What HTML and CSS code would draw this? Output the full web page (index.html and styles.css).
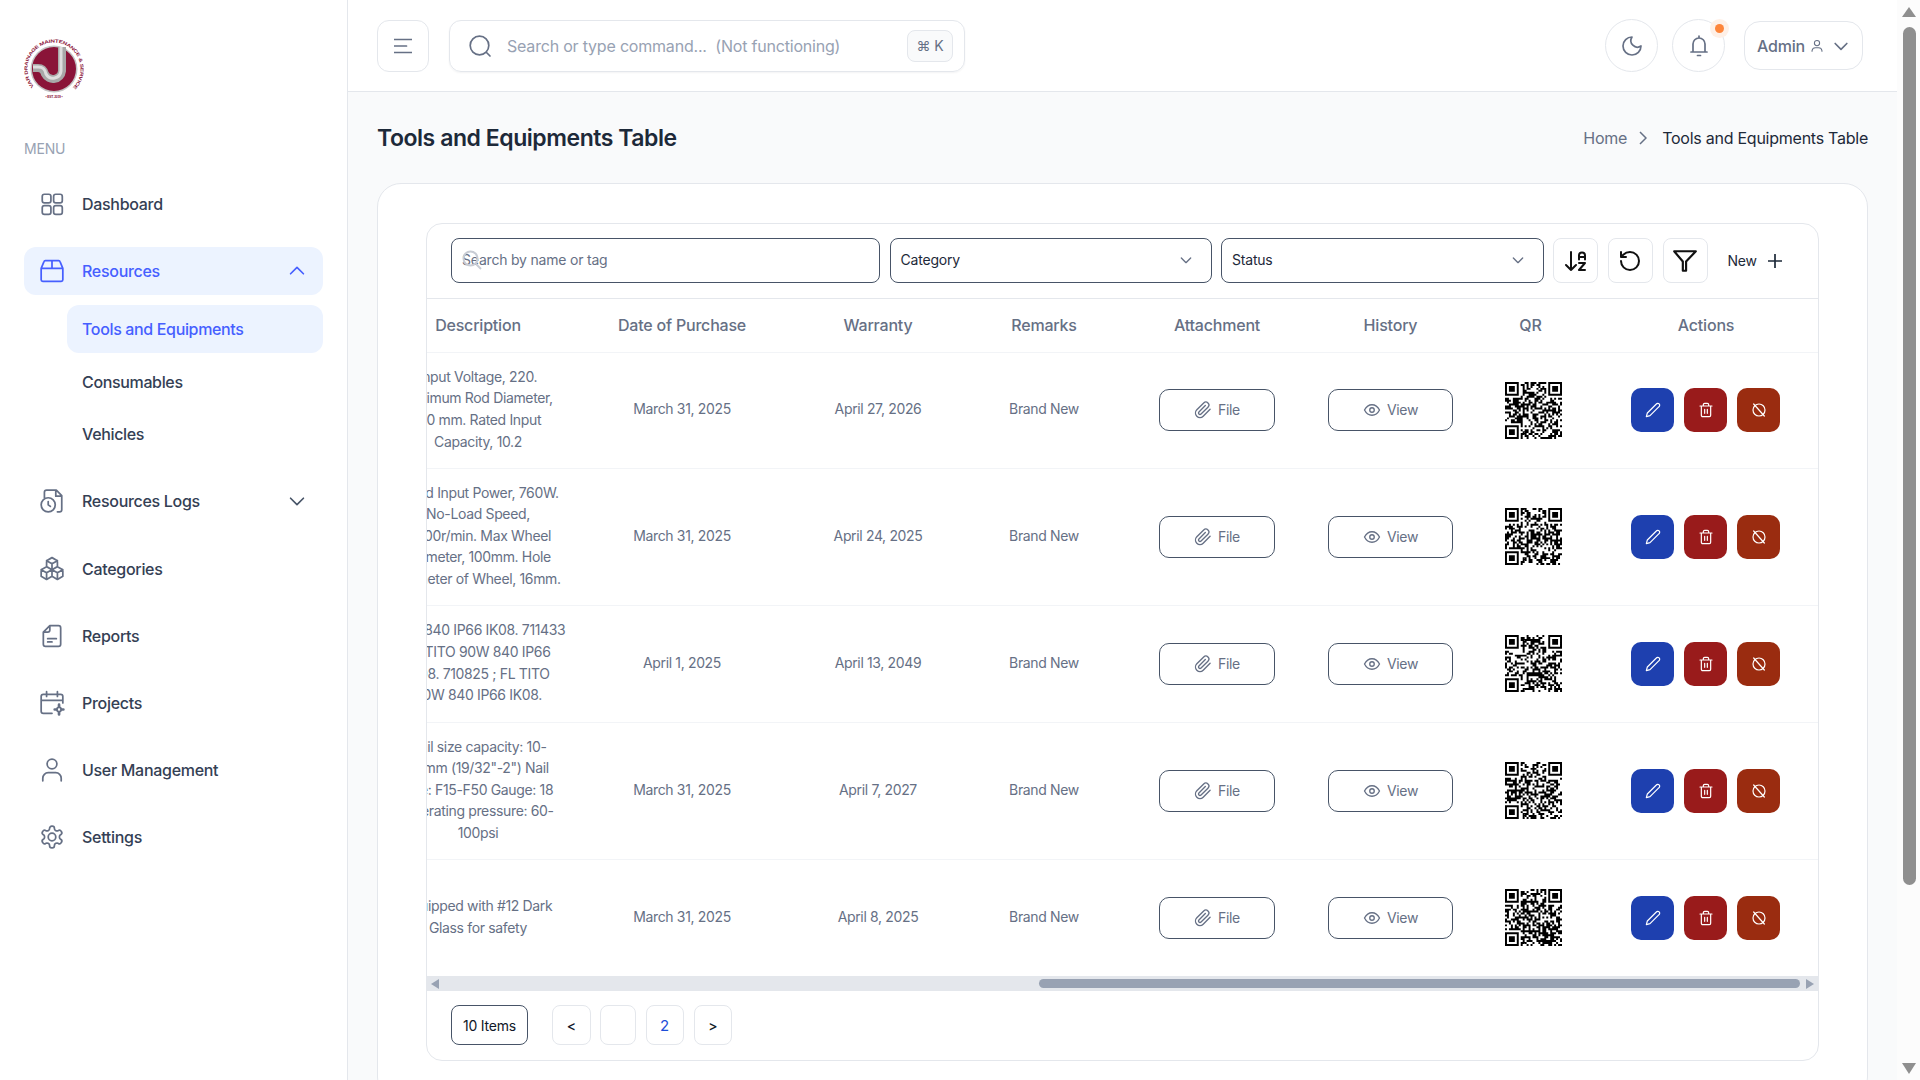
FILE: index.html
```html
<!DOCTYPE html>
<html lang="en">
<head>
<meta charset="utf-8">
<title>Tools and Equipments Table</title>
<link rel="stylesheet" href="styles.css">
</head>
<body>
<svg class="sprite" width="0" height="0" aria-hidden="true">
  <symbol id="i-clip" viewBox="0 0 24 24"><path d="M21.44 11.05l-9.19 9.19a6 6 0 0 1-8.49-8.49l9.19-9.19a4 4 0 0 1 5.66 5.66l-9.2 9.19a2 2 0 0 1-2.83-2.83l8.49-8.48"/></symbol>
  <symbol id="i-eye" viewBox="0 0 24 24"><path d="M2 12s3.6-7 10-7 10 7 10 7-3.6 7-10 7-10-7-10-7z"/><circle cx="12" cy="12" r="3"/></symbol>
  <symbol id="i-pencil" viewBox="0 0 24 24"><path d="M17 3a2.85 2.83 0 1 1 4 4L7.5 20.5 2 22l1.5-5.5Z"/></symbol>
  <symbol id="i-trash" viewBox="0 0 24 24"><path d="M3 6h18M19 6v14a2 2 0 0 1-2 2H7a2 2 0 0 1-2-2V6M8 6V4a2 2 0 0 1 2-2h4a2 2 0 0 1 2 2v2M10 11v6M14 11v6"/></symbol>
  <symbol id="i-ban" viewBox="0 0 24 24"><circle cx="12" cy="12" r="9"/><path d="M4 3l16 18"/></symbol>
  <symbol id="i-chev" viewBox="0 0 24 24"><path d="M5 9l7 7 7-7"/></symbol>
</svg>

<div class="app">
  <aside class="sidebar">
    <svg class="logo" viewBox="0 0 60 62" width="60" height="62" role="img" aria-label="Var Drainage Maintenance and Services">
      <defs><path id="ring" d="M10 48.4A26.5 26.5 0 1 1 50 48.4"/></defs>
      <circle cx="30" cy="31" r="23.5" fill="#c4c4c4"/>
      <circle cx="30" cy="31" r="22" fill="#8a1438"/>
      <path d="M38 9V33a9 9 0 0 1-17 3c-1-4-3-6-7-6H9" fill="none" stroke="#a8a8a8" stroke-width="8"/>
      <path d="M37 9V33a8 8 0 0 1-15 3c-1-5-3-7-8-7H9" fill="none" stroke="#dedede" stroke-width="3"/>
      <text class="logo-ring"><textPath href="#ring" textLength="126" lengthAdjust="spacingAndGlyphs">VAR DRAINAGE MAINTENANCE &amp; SERVICES</textPath></text>
      <text class="logo-est" x="30" y="60" text-anchor="middle">• EST. 2019 •</text>
    </svg>
    <div class="menu-label">MENU</div>
    <nav class="menu">
      <a class="item"><svg class="ico" viewBox="0 0 24 24"><rect x="3" y="3" width="8" height="8" rx="2"/><rect x="13.5" y="3" width="8" height="8" rx="2"/><rect x="3" y="13.5" width="8" height="8" rx="2"/><rect x="13.5" y="13.5" width="8" height="8" rx="2"/></svg><span>Dashboard</span></a>
      <div class="group">
        <a class="item active"><svg class="ico" viewBox="0 0 24 24"><path d="M2 9.5V20a1.5 1.5 0 0 0 1.5 1.5h17A1.5 1.5 0 0 0 22 20V9.5M2 9.5 4.5 3.5A1.5 1.5 0 0 1 6 2.5h12a1.5 1.5 0 0 1 1.5 1L22 9.5M2 9.5h20M12 2.5v7"/></svg><span>Resources</span><svg class="chev up" viewBox="0 0 24 24"><use href="#i-chev"/></svg></a>
        <div class="submenu">
          <a class="sub active">Tools and Equipments</a>
          <a class="sub">Consumables</a>
          <a class="sub">Vehicles</a>
        </div>
      </div>
      <a class="item item-logs"><svg class="ico" viewBox="0 0 24 24"><path d="M5 9V4a2 2 0 0 1 2-2h9l5 5v13a2 2 0 0 1-2 2h-2M15.5 2v5.5H21"/><circle cx="8.5" cy="15.5" r="6.5"/><path d="M8.5 12.5v3l2 1.5"/></svg><span>Resources Logs</span><svg class="chev" viewBox="0 0 24 24"><use href="#i-chev"/></svg></a>
      <a class="item"><svg class="ico wide" viewBox="0 0 24 24"><path d="M12 1.5l5 2.8v5.5l-5 2.8-5-2.8V4.300zM7 4.300l5 2.800 5-2.800M12 7.100v5.500M7 10l5 2.600v6l-5 3-5-3v-6zM2 12.600l5 2.900 5-2.900M7 15.500v6.100M17 10l5 2.600v6l-5 3-5-3v-6zM12 12.600l5 2.900 5-2.900M17 15.500v6.100"/></svg><span>Categories</span></a>
      <a class="item"><svg class="ico" viewBox="0 0 24 24"><path d="M10 2.500h8a2 2 0 0 1 2 2v15a2 2 0 0 1-2 2H6a2 2 0 0 1-2-2V8.500zM10 2.500v4a2 2 0 0 1-2 2H4M8 14.500h8M8 17.500h4"/></svg><span>Reports</span></a>
      <a class="item"><svg class="ico" viewBox="0 0 24 24"><path d="M12 21.500H4a2 2 0 0 1-2-2V6a2 2 0 0 1 2-2h16a2 2 0 0 1 2 2v6M2 9.500h20M7 1.500V6M17 1.500V6"/><circle cx="18.500" cy="18" r="2"/><path d="M18.500 13.500v1.700M18.500 20.800v1.700M14.500 18h1.700M20.800 18h1.700" stroke-width="2.500"/></svg><span>Projects</span></a>
      <a class="item"><svg class="ico" viewBox="0 0 24 24"><circle cx="12" cy="6.500" r="4.500"/><path d="M3.500 22v-2.500a5 5 0 0 1 5-5h7a5 5 0 0 1 5 5V22"/></svg><span>User Management</span></a>
      <a class="item"><svg class="ico" viewBox="0 0 24 24"><path d="M12.220 2h-.44a2 2 0 0 0-2 2v.18a2 2 0 0 1-1 1.730l-.43.25a2 2 0 0 1-2 0l-.15-.08a2 2 0 0 0-2.730.73l-.22.38a2 2 0 0 0 .73 2.730l.15.1a2 2 0 0 1 1 1.720v.51a2 2 0 0 1-1 1.740l-.15.09a2 2 0 0 0-.73 2.730l.22.38a2 2 0 0 0 2.730.73l.15-.08a2 2 0 0 1 2 0l.43.25a2 2 0 0 1 1 1.730V20a2 2 0 0 0 2 2h.44a2 2 0 0 0 2-2v-.18a2 2 0 0 1 1-1.730l.43-.25a2 2 0 0 1 2 0l.15.08a2 2 0 0 0 2.730-.73l.22-.39a2 2 0 0 0-.73-2.730l-.15-.08a2 2 0 0 1-1-1.740v-.5a2 2 0 0 1 1-1.740l.15-.09a2 2 0 0 0 .73-2.730l-.22-.38a2 2 0 0 0-2.730-.73l-.15.08a2 2 0 0 1-2 0l-.43-.25a2 2 0 0 1-1-1.730V4a2 2 0 0 0-2-2z"/><circle cx="12" cy="12" r="3.500"/></svg><span>Settings</span></a>
    </nav>
  </aside>

  <div class="main">
    <header class="topbar">
      <button class="square-btn"><svg class="burger" viewBox="0 0 18 16" width="18" height="16"><path d="M0 1.500h18M0 8h12.500M0 14.500h18"/></svg></button>
      <div class="cmd">
        <svg class="cmd-ico" viewBox="0 0 24 24" width="24" height="24"><circle cx="11.500" cy="11.500" r="9.300"/><path d="M18.500 18.500 22 22"/></svg>
        <span class="cmd-text">Search or type command...&nbsp; (Not functioning)</span>
        <span class="kbd">⌘ K</span>
      </div>
      <div class="top-right">
        <button class="round-btn"><svg class="top-ico" viewBox="0 0 24 24" width="24" height="24"><path d="M12 3a6.500 6.500 0 0 0 9 9 9 9 0 1 1-9-9Z"/></svg></button>
        <button class="round-btn"><svg class="top-ico" viewBox="0 0 24 24" width="24" height="24"><path d="M4 18h16M6 18V10a6 6 0 0 1 12 0v8M12 2v2M10.500 21.500h3"/></svg><span class="dot"></span></button>
        <button class="admin">Admin<svg class="admin-user" viewBox="0 0 24 24" width="14" height="14"><circle cx="12" cy="7" r="4.500"/><path d="M3.500 22v-2a6 6 0 0 1 6-5h5a6 6 0 0 1 6 5v2"/></svg><svg class="admin-chev" viewBox="0 0 24 24" width="20" height="20"><use href="#i-chev"/></svg></button>
      </div>
    </header>

    <main class="content">
      <div class="title-row">
        <h1>Tools and Equipments Table</h1>
        <div class="crumbs"><span class="home">Home</span><svg class="crumb-chev" viewBox="0 0 8 14" width="8" height="14"><path d="M1 1l6 6-6 6"/></svg><span>Tools and Equipments Table</span></div>
      </div>
      <section class="card">
        <div class="panel">
          <div class="toolbar">
            <div class="field f-search"><span class="ph">Search by name or tag</span><svg class="ghost" viewBox="0 0 20 20" width="20" height="20"><circle cx="8.500" cy="8.500" r="7"/><path d="M14 14l5 5"/></svg></div>
            <div class="field f-cat"><span>Category</span><svg class="sel-chev" viewBox="0 0 24 24" width="16" height="16"><use href="#i-chev"/></svg></div>
            <div class="field f-status"><span>Status</span><svg class="sel-chev" viewBox="0 0 24 24" width="16" height="16"><use href="#i-chev"/></svg></div>
            <button class="tool"><svg viewBox="0 0 24 24" width="24" height="24"><path d="m2 16 5 5 5-5M7 21V3M21 8h-6M15 10.500V6.500a3 3 0 0 1 6 0v4M15 14h6l-6 7h6"/></svg></button>
            <button class="tool"><svg viewBox="0 0 24 24" width="24" height="24"><path d="M3 12a9 9 0 1 0 9-9 9.750 9.750 0 0 0-6.740 2.740L3 8M3 3v5h5"/></svg></button>
            <button class="tool"><svg viewBox="0 0 24 24" width="26" height="26"><path d="M22 3H2l8 9.500V21h3v-8.500L22 3z"/></svg></button>
            <button class="new">New<svg viewBox="0 0 14 14" width="14" height="14"><path d="M7 0v14M0 7h14"/></svg></button>
          </div>

          <div class="table-view">
            <table>
              <colgroup><col class="c1"><col class="c2"><col class="c3"><col class="c4"><col class="c5"><col class="c6"><col class="c7"><col class="c8"></colgroup>
              <thead><tr><th>Description</th><th>Date of Purchase</th><th>Warranty</th><th>Remarks</th><th>Attachment</th><th>History</th><th>QR</th><th>Actions</th></tr></thead>
              <tbody>
                <tr class="r-116">
                  <td>Input Voltage, 220.<br>Minimum Rod Diameter,<br>4.0 mm. Rated Input<br>Capacity, 10.2</td>
                  <td>March 31, 2025</td><td>April 27, 2026</td><td>Brand New</td>
                  <td><button class="ghost-btn b-file"><svg viewBox="0 0 24 24" width="18" height="18"><use href="#i-clip"/></svg>File</button></td>
                  <td><button class="ghost-btn b-view"><svg viewBox="0 0 24 24" width="18" height="18"><use href="#i-eye"/></svg>View</button></td>
                  <td class="td-qr"><svg class="qr" data-seed="11" width="57" height="57"></svg></td>
                  <td><div class="acts"><button class="act a-blue"><svg viewBox="0 0 24 24" width="16" height="16"><use href="#i-pencil"/></svg></button><button class="act a-red"><svg viewBox="0 0 24 24" width="16" height="16"><use href="#i-trash"/></svg></button><button class="act a-orange"><svg viewBox="0 0 24 24" width="16" height="16"><use href="#i-ban"/></svg></button></div></td>
                </tr>
                <tr class="r-137">
                  <td>Rated Input Power, 760W.<br>No-Load Speed,<br>11000r/min. Max Wheel<br>Diameter, 100mm. Hole<br>Diameter of Wheel, 16mm.</td>
                  <td>March 31, 2025</td><td>April 24, 2025</td><td>Brand New</td>
                  <td><button class="ghost-btn b-file"><svg viewBox="0 0 24 24" width="18" height="18"><use href="#i-clip"/></svg>File</button></td>
                  <td><button class="ghost-btn b-view"><svg viewBox="0 0 24 24" width="18" height="18"><use href="#i-eye"/></svg>View</button></td>
                  <td class="td-qr"><svg class="qr" data-seed="29" width="57" height="57"></svg></td>
                  <td><div class="acts"><button class="act a-blue"><svg viewBox="0 0 24 24" width="16" height="16"><use href="#i-pencil"/></svg></button><button class="act a-red"><svg viewBox="0 0 24 24" width="16" height="16"><use href="#i-trash"/></svg></button><button class="act a-orange"><svg viewBox="0 0 24 24" width="16" height="16"><use href="#i-ban"/></svg></button></div></td>
                </tr>
                <tr class="r-117">
                  <td>36W 840 IP66 IK08. 711433<br>FL TITO 90W 840 IP66<br>IK08. 710825 ; FL TITO<br>90W 840 IP66 IK08.</td>
                  <td>April 1, 2025</td><td>April 13, 2049</td><td>Brand New</td>
                  <td><button class="ghost-btn b-file"><svg viewBox="0 0 24 24" width="18" height="18"><use href="#i-clip"/></svg>File</button></td>
                  <td><button class="ghost-btn b-view"><svg viewBox="0 0 24 24" width="18" height="18"><use href="#i-eye"/></svg>View</button></td>
                  <td class="td-qr"><svg class="qr" data-seed="47" width="57" height="57"></svg></td>
                  <td><div class="acts"><button class="act a-blue"><svg viewBox="0 0 24 24" width="16" height="16"><use href="#i-pencil"/></svg></button><button class="act a-red"><svg viewBox="0 0 24 24" width="16" height="16"><use href="#i-trash"/></svg></button><button class="act a-orange"><svg viewBox="0 0 24 24" width="16" height="16"><use href="#i-ban"/></svg></button></div></td>
                </tr>
                <tr class="r-137">
                  <td>Nail size capacity: 10-<br>25mm (19/32"-2") Nail<br>size: F15-F50 Gauge: 18<br>Operating pressure: 60-<br>100psi</td>
                  <td>March 31, 2025</td><td>April 7, 2027</td><td>Brand New</td>
                  <td><button class="ghost-btn b-file"><svg viewBox="0 0 24 24" width="18" height="18"><use href="#i-clip"/></svg>File</button></td>
                  <td><button class="ghost-btn b-view"><svg viewBox="0 0 24 24" width="18" height="18"><use href="#i-eye"/></svg>View</button></td>
                  <td class="td-qr"><svg class="qr" data-seed="63" width="57" height="57"></svg></td>
                  <td><div class="acts"><button class="act a-blue"><svg viewBox="0 0 24 24" width="16" height="16"><use href="#i-pencil"/></svg></button><button class="act a-red"><svg viewBox="0 0 24 24" width="16" height="16"><use href="#i-trash"/></svg></button><button class="act a-orange"><svg viewBox="0 0 24 24" width="16" height="16"><use href="#i-ban"/></svg></button></div></td>
                </tr>
                <tr class="r-117">
                  <td>Equipped with #12 Dark<br>Glass for safety</td>
                  <td>March 31, 2025</td><td>April 8, 2025</td><td>Brand New</td>
                  <td><button class="ghost-btn b-file"><svg viewBox="0 0 24 24" width="18" height="18"><use href="#i-clip"/></svg>File</button></td>
                  <td><button class="ghost-btn b-view"><svg viewBox="0 0 24 24" width="18" height="18"><use href="#i-eye"/></svg>View</button></td>
                  <td class="td-qr"><svg class="qr" data-seed="83" width="57" height="57"></svg></td>
                  <td><div class="acts"><button class="act a-blue"><svg viewBox="0 0 24 24" width="16" height="16"><use href="#i-pencil"/></svg></button><button class="act a-red"><svg viewBox="0 0 24 24" width="16" height="16"><use href="#i-trash"/></svg></button><button class="act a-orange"><svg viewBox="0 0 24 24" width="16" height="16"><use href="#i-ban"/></svg></button></div></td>
                </tr>
              </tbody>
            </table>
          </div>

          <div class="hscroll"><span class="tri tri-l"></span><span class="hspace"></span><span class="hthumb"></span><span class="tri tri-r"></span></div>

          <div class="pager">
            <button class="items">10 Items</button>
            <button class="pg pg-nav">&lt;</button>
            <button class="pg pg-blank"></button>
            <button class="pg pg-cur">2</button>
            <button class="pg pg-nav">&gt;</button>
          </div>
        </div>
      </section>
    </main>
  </div>

  <div class="vscroll"><span class="vtri vtri-up"></span><span class="vthumb"></span><span class="vtri vtri-down"></span></div>
</div>
<script src="app.js"></script>
</body>
</html>
```
FILE: styles.css
```css
* { box-sizing: border-box; }
html, body { margin: 0; height: 100%; overflow: hidden; }
body { font-family: Inter, "Liberation Sans", sans-serif; color: #344054; background: #fff; letter-spacing: -0.2px; }
button { font: inherit; letter-spacing: inherit; color: inherit; background: #fff; cursor: pointer; padding: 0; }
.sprite { position: absolute; }
svg { display: block; flex: none; }

.app { display: flex; height: 1080px; overflow: hidden; }

/* sidebar */
.sidebar { width: 348px; flex: none; border-right: 1px solid #e4e7ec; padding: 38px 24px 0; background: #fff; }
.logo { margin-bottom: 39px; }
.logo-ring { font: bold 4.600px "Liberation Sans", sans-serif; fill: #8a1438; }
.logo-est { font: bold 3.300px "Liberation Sans", sans-serif; fill: #8a1438; }
.menu-label { font-size: 14px; line-height: 20px; color: #98a2b3; margin-bottom: 21px; }
.menu { display: flex; flex-direction: column; gap: 19px; }
.item { display: flex; align-items: center; height: 48px; padding-left: 15px; padding-right: 15px; border-radius: 12px; font-size: 16px; font-weight: 500; color: #344054; width: 299px; letter-spacing: -0.3px; }
.item span { margin-left: 17px; flex: 1; }
.item-logs { margin-bottom: 1px; }
.ico { width: 26px; height: 26px; fill: none; stroke: #667085; stroke-width: 1.600; stroke-linejoin: round; stroke-linecap: round; }
.item.active { background: #ecf3ff; color: #465fff; }
.item.active .ico { stroke: #465fff; }
.chev { width: 22px; height: 22px; fill: none; stroke: #475467; stroke-width: 1.800; stroke-linecap: round; stroke-linejoin: round; }
.chev.up { transform: rotate(180deg); stroke: #465fff; }
.submenu { display: flex; flex-direction: column; gap: 4.500px; margin: 10px 0 0 43px; }
.sub { display: flex; align-items: center; height: 48px; padding-left: 15px; border-radius: 12px; font-size: 16px; font-weight: 500; color: #344054; letter-spacing: -0.35px; }
.sub.active { background: #ecf3ff; color: #465fff; }

/* main */
.main { width: 1549px; flex: none; display: flex; flex-direction: column; background: #f9fafb; min-height: 0; }
.topbar { height: 92px; flex: none; display: flex; align-items: center; padding: 0 34px 0 29px; background: #fff; border-bottom: 1px solid #e4e7ec; }
.square-btn { width: 52px; height: 52px; flex: none; border: 1px solid #e4e7ec; border-radius: 12px; display: flex; align-items: center; justify-content: center; }
.burger { fill: none; stroke: #667085; stroke-width: 1.700; stroke-linecap: round; }
.cmd { width: 516px; height: 52px; margin-left: 20px; border: 1px solid #e4e7ec; border-radius: 12px; display: flex; align-items: center; padding: 0 11px 0 18px; box-shadow: 0 1px 2px rgba(16,24,40,.05); }
.cmd-ico { fill: none; stroke: #667085; stroke-width: 1.700; stroke-linecap: round; }
.cmd-text { margin-left: 15px; flex: 1; font-size: 16px; color: #98a2b3; }
.kbd { width: 46px; height: 32px; border: 1px solid #e4e7ec; border-radius: 8px; background: #f9fafb; font-size: 14px; color: #667085; display: flex; align-items: center; justify-content: center; }
.top-right { margin-left: auto; display: flex; align-items: center; gap: 14px; }
.round-btn { position: relative; width: 53px; height: 53px; border: 1px solid #e4e7ec; border-radius: 50%; display: flex; align-items: center; justify-content: center; }
.top-ico { fill: none; stroke: #667085; stroke-width: 1.700; stroke-linecap: round; stroke-linejoin: round; }
.dot { position: absolute; top: 4px; right: 0; width: 9px; height: 9px; border-radius: 50%; background: #fd853a; box-shadow: 0 0 0 5px #fef0e7; }
.admin { width: 119px; height: 49px; margin-left: 5px; border: 1px solid #e4e7ec; border-radius: 16px; display: flex; align-items: center; padding-left: 12px; font-size: 16px; font-weight: 500; color: #667085; }
.admin-user { margin-left: 5px; fill: none; stroke: #667085; stroke-width: 1.800; }
.admin-chev { margin-left: 7px; fill: none; stroke: #667085; stroke-width: 2; stroke-linecap: round; stroke-linejoin: round; }

.content { flex: 1; padding: 30px 29px 0 29px; min-height: 0; }
.title-row { display: flex; align-items: center; justify-content: space-between; height: 32px; margin-bottom: 29px; }
h1 { margin: 0; font-size: 23px; line-height: 32px; font-weight: 600; color: #1d2939; letter-spacing: -0.45px; }
.crumbs { display: flex; align-items: center; font-size: 16px; color: #1d2939; letter-spacing: -0.25px; }
.home { color: #667085; }
.crumb-chev { margin: 0 15px 0 12px; fill: none; stroke: #667085; stroke-width: 1.500; }

.card { background: #fff; border: 1px solid #e4e7ec; border-radius: 24px; padding: 39px 48px 39px 48px; }
.panel { border: 1px solid #e4e7ec; border-radius: 16px; overflow: hidden; }

.toolbar { height: 75px; display: flex; align-items: center; gap: 9.500px; padding: 0 0 1px 24px; border-bottom: 1px solid #e4e7ec; font-size: 14px; }
.field { position: relative; height: 45px; display: flex; align-items: center; justify-content: space-between; border: 1px solid #475467; border-radius: 8px; padding: 0 17px 2px 10px; color: #1d2939; flex: none; }
.f-search { width: 429px; }
.f-cat { width: 322px; }
.f-status { width: 322.500px; }
.ph { color: #667085; }
.ghost { position: absolute; left: 10px; top: 11px; fill: none; stroke: #c8ccd4; stroke-width: 2; }
.sel-chev { fill: none; stroke: #667085; stroke-width: 2; stroke-linecap: round; stroke-linejoin: round; }
.tool { width: 45px; height: 45px; flex: none; border: 1px solid #e4e7ec; border-radius: 8px; display: flex; align-items: center; justify-content: center; }
.tool + .tool + .tool { margin-left: 0.500px; }
.tool svg { fill: none; stroke: #111; stroke-width: 2; stroke-linecap: round; stroke-linejoin: round; }
.new { margin-left: 10.500px; border: 0; display: flex; align-items: center; gap: 11px; font-size: 14px; color: #1d2939; }
.new svg { fill: none; stroke: #1d2939; stroke-width: 1.700; }

.table-view { display: flex; justify-content: flex-end; overflow: hidden; }
table { flex: none; width: 1438px; table-layout: fixed; border-collapse: collapse; font-size: 14px; color: #667085; }
.c1 { width: 196px; } .c2 { width: 212px; } .c3 { width: 180px; } .c4 { width: 152px; }
.c5 { width: 194px; } .c6 { width: 153px; } .c7 { width: 127px; } .c8 { width: 224px; }
th { height: 53px; font-size: 16px; font-weight: 500; color: #667085; text-align: center; border-bottom: 1px solid #f2f4f7; padding: 0; }
td { padding: 0 0 2px; line-height: 21.600px; text-align: center; vertical-align: middle; border-bottom: 1px solid #f2f4f7; letter-spacing: -0.35px; }
td:nth-child(n+5) { padding-bottom: 0; }
tbody tr:last-child td { border-bottom: 0; }
.r-116 { height: 116px; }
.r-117 { height: 117px; }
.r-137 { height: 137px; }
.ghost-btn { height: 42px; margin: 0 auto; display: flex; align-items: center; justify-content: center; gap: 6px; border: 1px solid #475467; border-radius: 10px; color: #667085; font-size: 14px; background: #fff; }
.ghost-btn svg { fill: none; stroke: #667085; stroke-width: 1.800; stroke-linecap: round; stroke-linejoin: round; }
.b-file { width: 116px; }
.b-view { width: 125px; }
td.td-qr { padding-left: 5px; }
.qr { margin: 0 auto; }
.acts { display: flex; justify-content: center; gap: 10px; padding-right: 1px; }
.act { width: 43px; height: 44px; border: 0; border-radius: 10px; display: flex; align-items: center; justify-content: center; }
.act svg { fill: none; stroke: #fff; stroke-width: 1.800; stroke-linecap: round; stroke-linejoin: round; }
.a-blue { background: #1e40af; }
.a-red { background: #991b1b; }
.a-orange { background: #9a2c10; }

.hscroll { height: 15px; display: flex; align-items: center; background: #e4e7ec; padding: 0 4px; }
.tri { width: 0; height: 0; border-top: 5px solid transparent; border-bottom: 5px solid transparent; flex: none; }
.tri-l { border-right: 8px solid #98a2b3; }
.tri-r { border-left: 8px solid #98a2b3; margin-left: 6px; }
.hspace { width: 600px; flex: none; }
.hthumb { width: 761px; flex: none; height: 9px; border-radius: 5px; background: #98a2b3; }

.pager { height: 69px; display: flex; align-items: center; padding: 0 0 1px 24px; font-size: 14px; }
.pager button { height: 40px; flex: none; border-radius: 8px; }
.items { width: 77px; margin-right: 24px; border: 1px solid #475467; color: #101828; }
.pg { border: 1px solid #e4e7ec; margin-right: 9.500px; }
.pg-nav { width: 38.500px; color: #101828; font-weight: 500; }
.pg-blank { width: 36px; }
.pg-cur { width: 38px; color: #1d4ed8; font-size: 15px; margin-right: 10px; }

/* window scrollbar */
.vscroll { width: 23px; flex: none; background: #fcfcfc; display: flex; flex-direction: column; align-items: center; padding: 7px 0 6px 1px; }
.vtri { width: 0; height: 0; border-left: 7px solid transparent; border-right: 7px solid transparent; flex: none; }
.vtri-up { border-bottom: 10px solid #8f8f8f; }
.vtri-down { border-top: 11px solid #8f8f8f; margin-top: auto; }
.vthumb { width: 13px; height: 858px; margin-top: 10px; border-radius: 7px; background: #8f8f8f; flex: none; }
```
FILE: app.js
```js
// Draws the QR code placeholders: finder patterns plus seeded pseudo-random modules.
document.querySelectorAll('.qr').forEach(function (svg) {
  var n = 29, seed = +svg.dataset.seed * 2654435761 >>> 0;
  function rnd() {
    seed = (seed ^ (seed << 13)) >>> 0;
    seed = (seed ^ (seed >>> 17)) >>> 0;
    seed = (seed ^ (seed << 5)) >>> 0;
    return seed / 4294967296;
  }
  function inFinder(x, y, ox, oy) { return x >= ox && x < ox + 8 && y >= oy && y < oy + 8; }
  var d = '';
  for (var y = 0; y < n; y++) {
    for (var x = 0; x < n; x++) {
      var on = rnd() < 0.52;
      if (inFinder(x, y, 0, 0) || inFinder(x, y, n - 8, 0) || inFinder(x, y, 0, n - 8)) on = false;
      if (on) d += 'M' + x + ' ' + y + 'h1v1h-1z';
    }
  }
  [[0, 0], [n - 7, 0], [0, n - 7]].forEach(function (p) {
    var a = p[0], b = p[1];
    d += 'M' + a + ' ' + b + 'h7v7h-7zM' + (a + 1) + ' ' + (b + 1) + 'v5h5v-5zM' + (a + 2) + ' ' + (b + 2) + 'h3v3h-3z';
  });
  svg.setAttribute('viewBox', '0 0 ' + n + ' ' + n);
  var path = document.createElementNS('http://www.w3.org/2000/svg', 'path');
  path.setAttribute('d', d);
  path.setAttribute('fill', '#000');
  path.setAttribute('fill-rule', 'evenodd');
  svg.appendChild(path);
});
```
